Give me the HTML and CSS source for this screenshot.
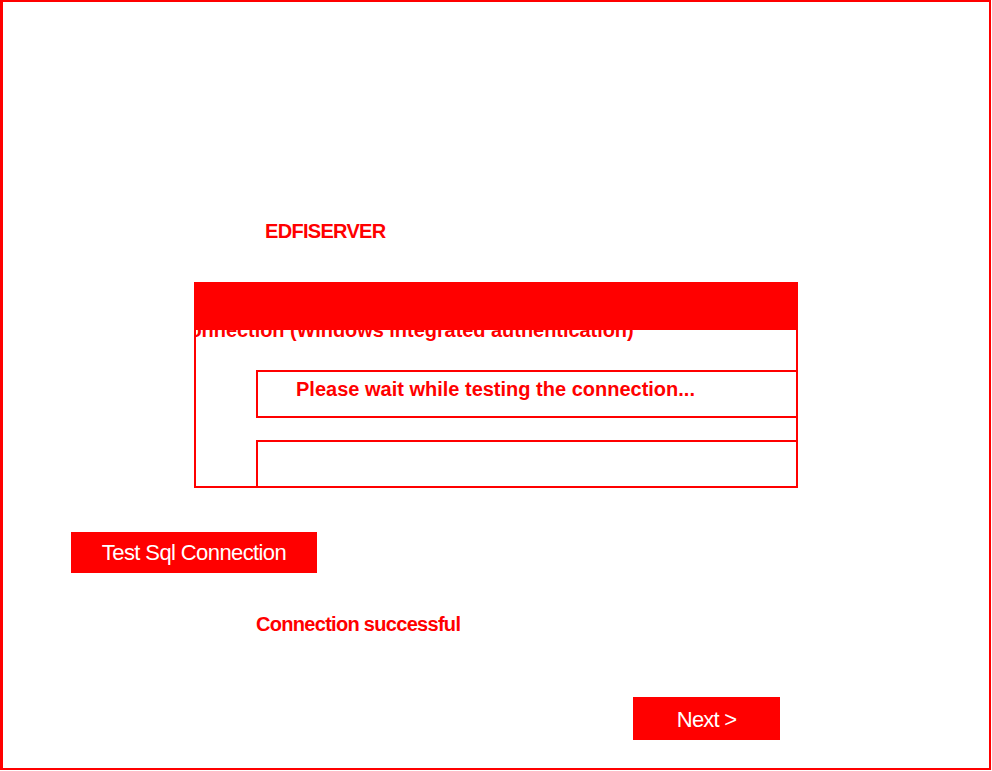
FILE: index.html
```html
<!DOCTYPE html>
<html lang="en">
<head>
<meta charset="utf-8">
<title>SQL Connection</title>
<link rel="stylesheet" href="styles.css">
</head>
<body>
<div class="page">
  <div class="server">EDFISERVER</div>
  <div class="panel">
    <div class="panel-head"></div>
    <div class="auth-label">Connection (Windows integrated authentication)</div>
    <div class="field field-status">Please wait while testing the connection...</div>
    <div class="field field-empty"></div>
  </div>
  <button class="btn btn-test">Test Sql Connection</button>
  <div class="result">Connection successful</div>
  <button class="btn btn-next">Next &gt;</button>
</div>
</body>
</html>
```

FILE: styles.css
```css
html, body {
  margin: 0;
  padding: 0;
  background: #ffffff;
}

.page {
  box-sizing: border-box;
  width: 991px;
  height: 770px;
  border: 2px solid #ff0000;
  border-left-width: 3px;
  display: flex;
  flex-direction: column;
  align-items: flex-start;
  font-family: "Liberation Sans", Arial, sans-serif;
  color: #ff0000;
  overflow: hidden;
}

.server {
  margin: 219px 0 0 262px;
  font-size: 20px;
  line-height: 20px;
  font-weight: bold;
  letter-spacing: -0.7px;
}

.panel {
  box-sizing: border-box;
  margin: 41px 0 0 191px;
  width: 604px;
  height: 206px;
  border: 2px solid #ff0000;
  overflow: hidden;
  display: flex;
  flex-direction: column;
  align-items: flex-start;
}

.panel-head {
  align-self: stretch;
  height: 46px;
  flex: none;
  background: #ff0000;
}

.auth-label {
  margin: -10px 0 0 -21px;
  font-size: 20px;
  line-height: 20px;
  font-weight: bold;
  letter-spacing: -0.05px;
  white-space: nowrap;
  flex: none;
}

.field {
  box-sizing: border-box;
  flex: none;
  margin-left: 60px;
  width: 580px;
  height: 48px;
  border: 2px solid #ff0000;
}

.field-status {
  margin-top: 30px;
  padding: 7px 0 0 38px;
  font-size: 20px;
  line-height: 20px;
  font-weight: bold;
  white-space: nowrap;
}

.field-empty {
  margin-top: 22px;
}

.btn {
  box-sizing: border-box;
  border: none;
  padding: 0;
  background: #ff0000;
  color: #ffffff;
  font-family: "Liberation Sans", Arial, sans-serif;
  font-weight: normal;
  text-align: center;
}

.btn-test {
  margin: 44px 0 0 68px;
  width: 246px;
  height: 41px;
  font-size: 22px;
  line-height: 41px;
  letter-spacing: -0.6px;
}

.result {
  margin: 41px 0 0 253px;
  font-size: 20px;
  line-height: 20px;
  font-weight: bold;
  letter-spacing: -0.7px;
}

.btn-next {
  margin: 63px 0 0 630px;
  width: 147px;
  height: 43px;
  padding-top: 2px;
  font-size: 22px;
  line-height: 41px;
  letter-spacing: -0.8px;
}
```
